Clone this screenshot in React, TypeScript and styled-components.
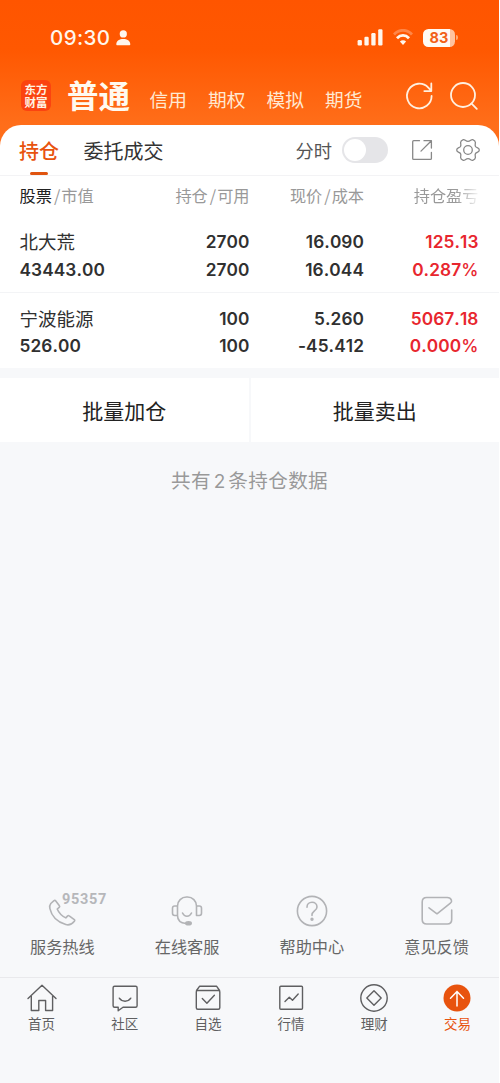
import React from "react";
import styled, { createGlobalStyle } from "styled-components";

const GlobalStyle = createGlobalStyle`
  * { box-sizing: border-box; }
  body { margin: 0; background: #fff; }
`;

const cjk = `"Noto Sans CJK SC", sans-serif`;
const latin = `Inter, "Noto Sans CJK SC", sans-serif`;

const Screen = styled.div`
  width: 499px;
  height: 1083px;
  display: flex;
  flex-direction: column;
  background: #f7f8fa;
  color: #333;
  font-family: ${cjk};
`;

const Hero = styled.div`
  background: linear-gradient(#ff5500 0px, #ff5801 50px, #ff6e1a 125px, #ff6e1a 100%);
`;

const StatusBar = styled.div`
  height: 69px;
  padding: 6px 41px 0 50px;
  display: flex;
  align-items: center;
  color: #fff6ec;
`;

const Clock = styled.span`
  width: 66px;
  font: 500 20.5px/24px ${latin};
  letter-spacing: 0.4px;
`;

const StatusIcons = styled.div`
  margin-left: auto;
  display: flex;
  align-items: center;
`;

const Battery = styled.div`
  width: 32px;
  height: 18px;
  margin-left: 10px;
  border-radius: 5.5px;
  background: linear-gradient(90deg, #fffaf4 27px, #ffc39f 27px);
  color: #f26018;
  font: 700 14.5px/18px ${latin};
  text-align: center;
`;

const BatteryTip = styled.div`
  width: 2px;
  height: 5px;
  margin-left: 1px;
  border-radius: 0 2px 2px 0;
  background: #ffa873;
`;

const NavBar = styled.div`
  height: 56px;
  padding: 0 20px 0 21px;
  display: flex;
  align-items: flex-start;
  color: #fff0e0;
`;

const Logo = styled.div`
  width: 30px;
  height: 31px;
  margin-top: 11px;
  padding-top: 3px;
  border-radius: 6px;
  background: #fb4310;
  color: #fff3e4;
  font: 700 11.5px/12.5px ${cjk};
  text-align: center;
`;

const AccountTitle = styled.div`
  width: 83px;
  padding-left: 16px;
  margin-top: 3px;
  font: 700 31.5px/44px ${cjk};
  color: #fffaf0;
  white-space: nowrap;
`;

const AccountLink = styled.div`
  width: 58.5px;
  margin-top: 16px;
  font: 400 18.7px/28px ${cjk};
  text-indent: 15.5px;
  color: #ffe9d2;
  white-space: nowrap;
`;

const NavIcons = styled.div`
  margin: 12px 0 0 auto;
  display: flex;
  gap: 15px;
`;

const Sheet = styled.div`
  height: 243px;
  border-radius: 21px 21px 0 0;
  background: #fff;
`;

const Tabs = styled.div`
  height: 51px;
  padding: 0 19px;
  display: flex;
  align-items: flex-start;
  border-bottom: 1px solid #f3f3f5;
`;

const Tab = styled.div<{ $active?: boolean }>`
  position: relative;
  height: 50px;
  margin-right: 24.5px;
  font: ${(p) => (p.$active ? 500 : 400)} 20px/51px ${cjk};
  color: ${(p) => (p.$active ? "#e8530e" : "#333")};
  &::after {
    content: "";
    display: ${(p) => (p.$active ? "block" : "none")};
    position: absolute;
    left: 11px;
    bottom: 0;
    width: 18px;
    height: 3.5px;
    border-radius: 2px;
    background: #e0540f;
  }
`;

const TabTools = styled.div`
  height: 50px;
  margin-left: auto;
  display: flex;
  align-items: center;
`;

const ToggleLabel = styled.span`
  font-size: 18.3px;
  line-height: 50px;
  color: #555;
`;

const Toggle = styled.div`
  width: 46px;
  height: 26px;
  margin: 0 23px 0 10px;
  padding: 2px;
  border-radius: 13px;
  background: #e5e5e8;
  &::before {
    content: "";
    display: block;
    width: 22px;
    height: 22px;
    border-radius: 50%;
    background: #fff;
  }
`;

const Columns = styled.div`
  display: grid;
  grid-template-columns: 120px 110px 114.5px 114.5px;
  padding-left: 19.5px;
  text-align: right;
  & > :first-child { text-align: left; }
`;

const TableHead = styled(Columns)`
  height: 40px;
  font-size: 16.2px;
  line-height: 39px;
  color: #999;
  white-space: nowrap;
`;

const HeadCell = styled.div<{ $fade?: boolean }>`
  overflow: hidden;
  ${(p) => p.$fade && "mask-image: linear-gradient(90deg, #000 92px, transparent 117px);"}
  b { font-weight: 400; color: #222; }
  i { font-style: normal; padding: 0 1px 0 2px; }
`;

const HoldingRow = styled(Columns)`
  height: 76px;
  padding-top: 12px;
  & + & { border-top: 1px solid #f3f4f6; padding-top: 11.5px; }
`;

const Cell = styled.div<{ $gain?: boolean }>`
  font: 600 17.3px/27.6px ${latin};
  font-kerning: none;
  letter-spacing: 0.08px;
  color: ${(p) => (p.$gain ? "#e8262e" : "#303030")};
`;

const StockName = styled.div`
  font: 400 18.5px/27.6px ${cjk};
  letter-spacing: 0;
  white-space: nowrap;
`;

const Percent = styled.span`
  font-weight: 500;
`;

const BatchActions = styled.div`
  height: 64px;
  margin-top: 10px;
  display: grid;
  grid-template-columns: 1fr 1fr;
  gap: 2px;
`;

const BatchButton = styled.button`
  border: 0;
  padding: 0;
  background: #fff;
  color: #222;
  font: 400 21px/64px ${cjk};
`;

const Summary = styled.div`
  margin-top: 23px;
  font-size: 19.6px;
  line-height: 30px;
  letter-spacing: 0.35px;
  text-align: center;
  color: #999;
  span { padding: 0 2.5px 0 3px; font: 400 19px/20px ${latin}; }
`;

const Services = styled.div`
  margin-top: auto;
  height: 86px;
  display: grid;
  grid-template-columns: repeat(4, 1fr);
`;

const Service = styled.div`
  position: relative;
  display: flex;
  flex-direction: column;
  align-items: center;
  font-size: 16.2px;
  line-height: 24px;
  color: #666;
`;

const ServiceIcon = styled.span`
  height: 43px;
  padding-top: 4px;
  color: #b2b3b6;
  svg { display: block; }
`;

const HotlineNumber = styled.span`
  position: absolute;
  left: 62px;
  top: 2px;
  font: 700 14.5px/14px Roboto, sans-serif;
  letter-spacing: 0.7px;
  color: #b6b7ba;
`;

const TabBar = styled.div`
  height: 106px;
  border-top: 1px solid #e9e9ec;
  display: grid;
  grid-template-columns: repeat(6, 1fr);
`;

const BarItem = styled.div<{ $active?: boolean }>`
  padding-top: 5px;
  display: flex;
  flex-direction: column;
  align-items: center;
  font-size: 13.5px;
  line-height: 20px;
  color: ${(p) => (p.$active ? "#e8530e" : "#5f5f61")};
`;

const WifiSvg = styled.svg`
  margin-left: 10px;
`;

const GearSvg = styled.svg`
  margin-left: 23px;
`;

const Line = ({ size, width = 1.3, children }: { size: number; width?: number; children: React.ReactNode }) => (
  <svg width={size} height={size} viewBox={`0 0 ${size} ${size}`} fill="none" stroke="currentColor"
    strokeWidth={width} strokeLinecap="round" strokeLinejoin="round">{children}</svg>
);

const PersonIcon = () => (
  <svg width="15" height="16" viewBox="0 0 15 16" fill="currentColor">
    <circle cx="7.3" cy="3.9" r="3.6" />
    <path d="M.3 14.2C.3 10.8 3.6 9 7.3 9s7 1.8 7 5.2c0 .8-.4 1.1-1.1 1.1H1.4c-.7 0-1.1-.3-1.1-1.1Z" />
  </svg>
);

const SignalIcon = () => (
  <svg width="26" height="17" viewBox="0 0 26 17" fill="currentColor">
    <rect x=".6" y="11" width="4.3" height="5.5" rx="1.2" />
    <rect x="7.4" y="7.7" width="4.3" height="8.8" rx="1.2" />
    <rect x="14.3" y="4" width="4.3" height="12.5" rx="1.2" />
    <rect x="21.2" y=".3" width="4.3" height="16.2" rx="1.2" />
  </svg>
);

const WifiIcon = () => (
  <WifiSvg width="20" height="17" viewBox="0 0 20 17" fill="none" stroke="currentColor" strokeWidth="2.8">
    <path d="M1 5.5C6-.1 14-.1 19 5.5" opacity=".3" />
    <path d="M4 9.2c3.5-3.7 8.5-3.7 12 0" />
    <path d="M6.9 12.6c1.8-1.7 4.4-1.7 6.2 0L10 15.9Z" fill="currentColor" stroke="none" />
  </WifiSvg>
);

const holdings = [
  { name: "北大荒", value: "43443.00", held: "2700", free: "2700", price: "16.090", cost: "16.044", gain: "125.13", rate: "0.287" },
  { name: "宁波能源", value: "526.00", held: "100", free: "100", price: "5.260", cost: "-45.412", gain: "5067.18", rate: "0.000" },
];

const services = [
  { label: "服务热线", icon: <path d="M4.8 8.5 8 5.7c.5-.5 1.2-.4 1.6.1l3.8 5c.4.5.3 1.1-.2 1.5l-2 1.7c1.8 4.1 4.6 7 8.6 8.9l1.9-2c.4-.5 1-.5 1.5-.1l5.1 3.8c.5.4.6 1.1.1 1.6-2.5 3-5.3 4.4-8.6 3.3C11.300 27 5.7 21.5 3.9 13.6c-.4-2-.1-3.9.9-5.1Z" /> },
  { label: "在线客服", icon: <><path d="M6.5 20.5V11a9 9 0 0 1 9-9h1a9 9 0 0 1 9 9v9.5h2.8q2.2 0 2.2-2.2v-5.1q0-2.2-2.2-2.2h-2.8M6.5 11H3.7q-2.2 0-2.2 2.2v5.1q0 2.2 2.2 2.2h2.8c0 4.5 3 7.5 8.5 8" /><path d="M11.5 18c2 4.3 7 4.3 9 0" /><ellipse cx="17.5" cy="28.3" rx="2.7" ry="1.5" fill="currentColor" /></> },
  { label: "帮助中心", icon: <><circle cx="16" cy="16" r="14.6" /><path d="M11 12.2c0-3 2.2-4.9 5-4.9s5 1.9 5 4.6c0 3.8-5 4.3-5 7.9v.7" /><circle cx="16" cy="24.3" r=".9" fill="currentColor" /></> },
  { label: "意见反馈", icon: <path d="M30.700 15v9.500q0 4.500-4.500 4.500H5.700q-4.500 0-4.500-4.500V7q0-4.500 4.500-4.500h20.500c2.200 0 3.600 1 4.200 2.600.5 1.400 0 2.300-1 3.100L16 18.800l-8-6" /> },
];

const barItems = [
  { label: "首页", icon: <path d="m1 15.5 14-13.2 14 13.2M4.3 13v14.5h7.5V17.500h6.800v10h7V13" /> },
  { label: "社区", icon: <><path d="M4.6 3.3h21q1.500 0 1.500 1.500v18q0 1.500-1.500 1.500H13l-4.800 3.500v-3.500H4.600q-1.500 0-1.500-1.500v-18q0-1.500 1.500-1.500Z" /><path d="M9.300 15.200c2.700 4 8.800 4 11.500 0" /></> },
  { label: "自选", icon: <><path d="M3.5 7.5 6.5 3.3h17.200l2.900 4.200M4.500 7.500h21.100q1.200 0 1.200 1.200v16.100q0 1.500-1.500 1.500H4.800q-1.500 0-1.500-1.500V8.700q0-1.200 1.200-1.200Z" /><path d="m9.300 15.500 4.600 4.700 7.500-8" /></> },
  { label: "行情", icon: <><rect x="3.8" y="3.3" width="22.7" height="23" rx="1" /><path d="m9 18.500 4.300-4.300 3.200 3 5.700-6.200" /></> },
  { label: "理财", icon: <><circle cx="15" cy="15" r="13.2" /><path d="m15 7.8 7.2 7.2-7.2 7.2L7.800 15Z" /></> },
  { label: "交易", icon: <><circle cx="15" cy="15" r="13.5" fill="#e8530e" stroke="none" /><path d="M15 23V8.500m-6.500 6.700L15 8.500l6.500 6.700" stroke="#fff" strokeWidth="1.5" /></> },
];

const Head = ({ a, b }: { a: React.ReactNode; b: string }) => (
  <HeadCell>{a}<i>/</i>{b}</HeadCell>
);

export default function App() {
  return (
    <Screen>
      <GlobalStyle />
      <Hero>
        <StatusBar>
          <Clock>09:30</Clock>
          <PersonIcon />
          <StatusIcons>
            <SignalIcon />
            <WifiIcon />
            <Battery>83</Battery>
            <BatteryTip />
          </StatusIcons>
        </StatusBar>
        <NavBar>
          <Logo>东方<br />财富</Logo>
          <AccountTitle>普通</AccountTitle>
          {["信用", "期权", "模拟", "期货"].map((t) => <AccountLink key={t}>{t}</AccountLink>)}
          <NavIcons>
            <Line size={30} width={1.8}><path d="M27.6 15A12.3 12.3 0 1 1 24.3 6.6l3 3.2M27.3 2.5v7.6h-7" /></Line>
            <Line size={30} width={1.8}><circle cx="14" cy="14" r="12" /><path d="m22.6 22.6 5.2 5.2" /></Line>
          </NavIcons>
        </NavBar>
        <Sheet>
          <Tabs>
            <Tab $active>持仓</Tab>
            <Tab>委托成交</Tab>
            <TabTools>
              <ToggleLabel>分时</ToggleLabel>
              <Toggle />
              <Line size={22} width={1.3}><path d="M8.5 1.700H2.700q-1 0-1 1v16.700q0 1 1 1h16.700q1 0 1-1v-5.900M13 1.700h7.400V9M20.100 2 10 12.100" stroke="#888" /></Line>
              <GearSvg width="24" height="24" viewBox="0 0 24 24" fill="none" stroke="#888" strokeWidth="1.3" strokeLinejoin="round">
                <path d="M7.3 1.7c1.5-.5 2.3 1.7 4.7 1.7s3.2-2.2 4.7-1.7c1.6.6 2.7 1.4 2.7 2.8 0 1.7-.8 2.7.2 4.1 1 1.3 3.7 1 3.7 3.4s-2.7 2.1-3.7 3.4c-1 1.4-.2 2.4-.2 4.1 0 1.4-1.1 2.2-2.7 2.8-1.5.5-2.3-1.7-4.7-1.7s-3.2 2.2-4.7 1.7c-1.6-.6-2.7-1.4-2.7-2.8 0-1.7.8-2.7-.2-4.1-1-1.3-3.7-1-3.7-3.4s2.7-2.1 3.7-3.4c1-1.4.2-2.4.2-4.1 0-1.4 1.1-2.2 2.7-2.8Z" />
                <circle cx="12" cy="12" r="4.3" />
              </GearSvg>
            </TabTools>
          </Tabs>
          <TableHead>
            <Head a={<b>股票</b>} b="市值" />
            <Head a="持仓" b="可用" />
            <Head a="现价" b="成本" />
            <HeadCell $fade>持仓盈亏</HeadCell>
          </TableHead>
          {holdings.map((h) => (
            <HoldingRow key={h.name}>
              <Cell><StockName>{h.name}</StockName>{h.value}</Cell>
              <Cell>{h.held}<br />{h.free}</Cell>
              <Cell>{h.price}<br />{h.cost}</Cell>
              <Cell $gain>{h.gain}<br />{h.rate}<Percent>%</Percent></Cell>
            </HoldingRow>
          ))}
        </Sheet>
      </Hero>
      <BatchActions>
        <BatchButton>批量加仓</BatchButton>
        <BatchButton>批量卖出</BatchButton>
      </BatchActions>
      <Summary>共有<span>2</span>条持仓数据</Summary>
      <Services>
        {services.map((s, i) => (
          <Service key={s.label}>
            {i === 0 && <HotlineNumber>95357</HotlineNumber>}
            <ServiceIcon><Line size={32} width={1.6}>{s.icon}</Line></ServiceIcon>
            {s.label}
          </Service>
        ))}
      </Services>
      <TabBar>
        {barItems.map((b, i) => (
          <BarItem key={b.label} $active={i === 5}>
            <Line size={30} width={1.4}>{b.icon}</Line>
            {b.label}
          </BarItem>
        ))}
      </TabBar>
    </Screen>
  );
}
